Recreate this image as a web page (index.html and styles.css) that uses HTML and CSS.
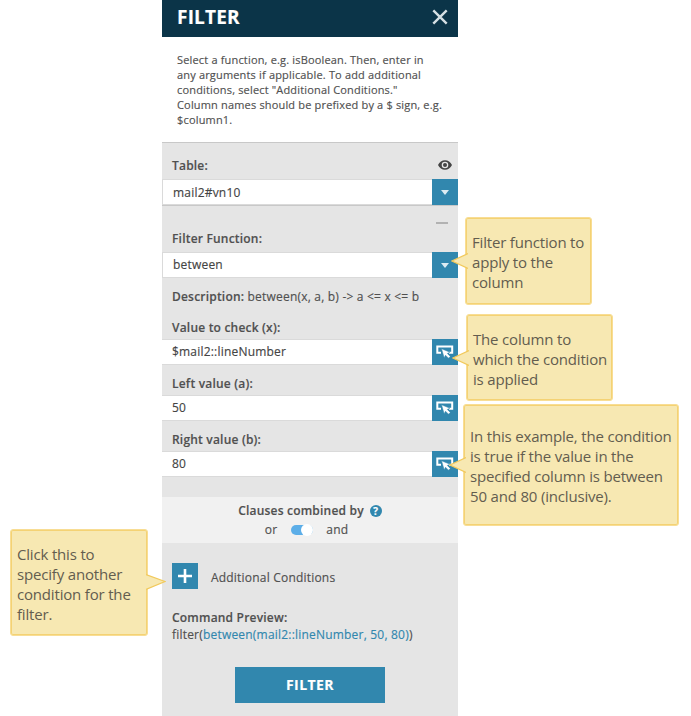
FILE: index.html
```html
<!DOCTYPE html>
<html lang="en">
<head>
<meta charset="utf-8">
<title>Filter</title>
<link rel="stylesheet" href="styles.css">
</head>
<body>
<svg width="0" height="0" class="defs">
  <symbol id="pick" viewBox="0 0 18 14">
    <path d="M5 7.7H1.3V1.5H16.200V7.7H13" fill="none" stroke="#fff" stroke-width="2"/>
    <path d="M5.5 3.8l8.500 3.4-2.7 1.2 3 3-1.8 1.800-3-3-1.300 2.6z" fill="#fff" stroke="#3187ae" stroke-width=".5"/>
  </symbol>
</svg>
<main class="panel">
  <header class="head">
    <h1>FILTER</h1>
    <svg class="close" width="16" height="16" viewBox="0 0 16 16"><path d="M1.3 1.3L14.7 14.7M14.7 1.3L1.3 14.7" stroke="#d5dfe3" stroke-width="2.400"/></svg>
  </header>
  <p class="intro">Select a function, e.g. isBoolean. Then, enter in<br>any arguments if applicable. To add additional<br>conditions, select "Additional Conditions."<br>Column names should be prefixed by a $ sign, e.g.<br>$column1.</p>
  <section class="table">
    <div class="label"><b>Table:</b>
      <svg width="14" height="10" viewBox="0 0 14 10"><path fill="#444" fill-rule="evenodd" d="M0 5C1.5 2 4 .2 7 .2S12.500 2 14 5C12.500 8 10 9.800 7 9.800S1.500 8 0 5zM7 1.700a3.300 3.300 0 1 0 0 6.600a3.300 3.300 0 1 0 0-6.600z"/><circle cx="7" cy="5" r="2" fill="#444"/></svg>
    </div>
    <div class="row select low"><span>mail2#vn10</span><i class="btn"><svg width="8" height="5"><path d="M0 0H8L4 5z" fill="#dcebf2"/></svg></i></div>
  </section>
  <section class="function">
    <div class="minus"><i></i></div>
    <div class="label"><b>Filter Function:</b></div>
    <div class="row select"><span>between</span><i class="btn"><svg width="8" height="5"><path d="M0 0H8L4 5z" fill="#dcebf2"/></svg></i></div>
    <p class="desc"><b>Description:</b> between(x, a, b) -&gt; a &lt;= x &lt;= b</p>
    <div class="label arg first"><b>Value to check (x):</b></div>
    <div class="row"><span>$mail2::lineNumber</span><i class="btn"><svg width="18" height="14"><use href="#pick"/></svg></i></div>
    <div class="label arg"><b>Left value (a):</b></div>
    <div class="row"><span>50</span><i class="btn"><svg width="18" height="14"><use href="#pick"/></svg></i></div>
    <div class="label arg"><b>Right value (b):</b></div>
    <div class="row"><span>80</span><i class="btn"><svg width="18" height="14"><use href="#pick"/></svg></i></div>
  </section>
  <section class="clauses">
    <div class="combine"><b>Clauses combined by</b><span class="help">?</span></div>
    <div class="switch"><span>or</span><i class="toggle"></i><span>and</span></div>
  </section>
  <div class="more"><i class="plus"><svg width="16" height="16"><path d="M8 1V15M1 8H15" stroke="#fff" stroke-width="2.600"/></svg></i><span>Additional Conditions</span></div>
  <div class="preview"><b>Command Preview:</b><span class="command">filter(<em>between(mail2::lineNumber, 50, 80)</em>)</span></div>
  <button class="submit">FILTER</button>
</main>
<aside class="callout c1"><svg class="tail" width="17" height="18"><path d="M17 1.500L1 9L17 16.500"/></svg>Filter function to<br>apply to the<br>column</aside>
<aside class="callout c2"><svg class="tail" width="17" height="18"><path d="M17 1.500L1 9L17 16.500"/></svg>The column to<br>which the condition<br>is applied</aside>
<aside class="callout c3"><svg class="tail" width="17" height="18"><path d="M17 1.500L1 9L17 16.500"/></svg>In this example, the condition<br>is true if the value in the<br>specified column is between<br>50 and 80 (inclusive).</aside>
<aside class="callout c4"><svg class="tail" width="20" height="18"><path d="M0 1.500L19 8.500L0 16.500"/></svg>Click this to<br>specify another<br>condition for the<br>filter.</aside>
</body>
</html>
```
FILE: styles.css
```css
* { box-sizing: border-box; }
body { margin: 0; height: 716px; position: relative; overflow: hidden; background: #fff; color: #505050; font: 400 12px/18px "Open Sans", sans-serif; }
.defs { position: absolute; }
svg { display: block; }
b { font-weight: 600; color: #505050; }
i, em { font-style: normal; }
.panel { width: 296px; height: 716px; margin-left: 162px; background: #e5e5e5; letter-spacing: .2px; -webkit-text-stroke: .15px currentColor; }
.head { display: flex; justify-content: space-between; align-items: center; height: 37px; padding: 0 10px 4px 15px; background: #0b3448; }
h1 { margin: 0; color: #fff; font-size: 19px; line-height: 26px; font-weight: 700; }
.intro { margin: 0; height: 105px; padding: 15px 0 0 15px; background: #fff; font-size: 11px; line-height: 15px; letter-spacing: .17px; white-space: nowrap; }
.table { height: 64px; padding-top: 14px; border-top: 1px solid #c8c8c8; border-bottom: 1px solid #c8c8c8; }
.label { display: flex; justify-content: space-between; height: 22px; padding: 0 6px 0 10px; line-height: 18px; }
.label svg { margin-top: 3px; }
.row { display: flex; align-items: center; justify-content: space-between; height: 26px; padding-left: 10px; background: #fff; border-top: 1px solid #dadada; border-bottom: 1px solid #dadada; color: #444; }
.select { padding-left: 10px; border-left: 1px solid #dadada; }
.low span { padding-top: 2px; }
.btn { display: flex; align-items: center; justify-content: center; width: 26px; height: 26px; background: #3187ae; }
.minus { height: 24px; padding: 16px 10px 0 0; }
.minus i { display: block; width: 12px; height: 2px; margin-left: auto; background: #b2b2b2; }
.desc { margin: 0; height: 40px; padding: 10px 0 0 10px; white-space: nowrap; }
.function .label { height: 22px; }
.function .arg { height: 30px; padding-top: 10px; }
.function .first { height: 21px; padding-top: 1px; }
.clauses { height: 46px; margin-top: 20px; padding-top: 4px; background: #f1f1f1; }
.combine, .switch { display: flex; justify-content: center; align-items: center; }
.combine { height: 20px; gap: 6px; }
.help { width: 12px; height: 12px; border-radius: 50%; background: #3187ae; color: #fff; font-size: 10px; line-height: 12px; font-weight: 700; text-align: center; }
.switch { height: 18px; padding-right: 7px; }
.toggle { display: flex; justify-content: flex-end; width: 22px; height: 10px; margin: 0 13px 0 14px; border-radius: 5px; background: #5caee8; }
.toggle::after { content: ""; width: 12px; height: 12px; margin-top: -1px; border-radius: 50%; background: #fff; }
.more { display: flex; align-items: center; gap: 13px; height: 26px; margin: 20px 0 0 10px; }
.more span { padding-top: 3px; }
.plus { display: flex; align-items: center; justify-content: center; width: 26px; height: 26px; background: #3187ae; }
.preview { height: 58px; margin: 20px 0 0 10px; line-height: 17px; white-space: nowrap; }
.preview b, .preview span { display: block; width: max-content; }
.preview em { color: #3187ae; }
.submit { display: block; width: 150px; height: 36px; margin: 0 0 0 73px; padding: 0; border: 0; background: #3187ae; color: #fff; font: 700 14px/36px "Open Sans", sans-serif; letter-spacing: .45px; }
.callout { position: absolute; padding-left: 6px; border: 1px solid #f8dd94; border-radius: 3px; box-shadow: inset 0 0 0 1px #f4d274; background: #f7e8b2; color: #635d4f; font-size: 15px; font-weight: 400; line-height: 20px; letter-spacing: -.18px; white-space: nowrap; }
.tail { position: absolute; fill: #f7e8b2; stroke: #f1c95c; stroke-width: 1.200; }
.c1 { left: 465px; top: 217px; width: 127px; height: 88px; padding-top: 14px; }
.c1 .tail { left: -15px; top: 34px; }
.c2 { left: 466px; top: 314px; width: 147px; height: 87px; padding-top: 14px; }
.c2 .tail { left: -15px; top: 34px; }
.c3 { left: 463px; top: 404px; width: 216px; height: 122px; padding-top: 21px; }
.c3 .tail { left: -15px; top: 51px; }
.c4 { left: 10px; top: 529px; width: 138px; height: 107px; padding-top: 14px; }
.c4 .tail { left: 135px; top: 43px; }
```
